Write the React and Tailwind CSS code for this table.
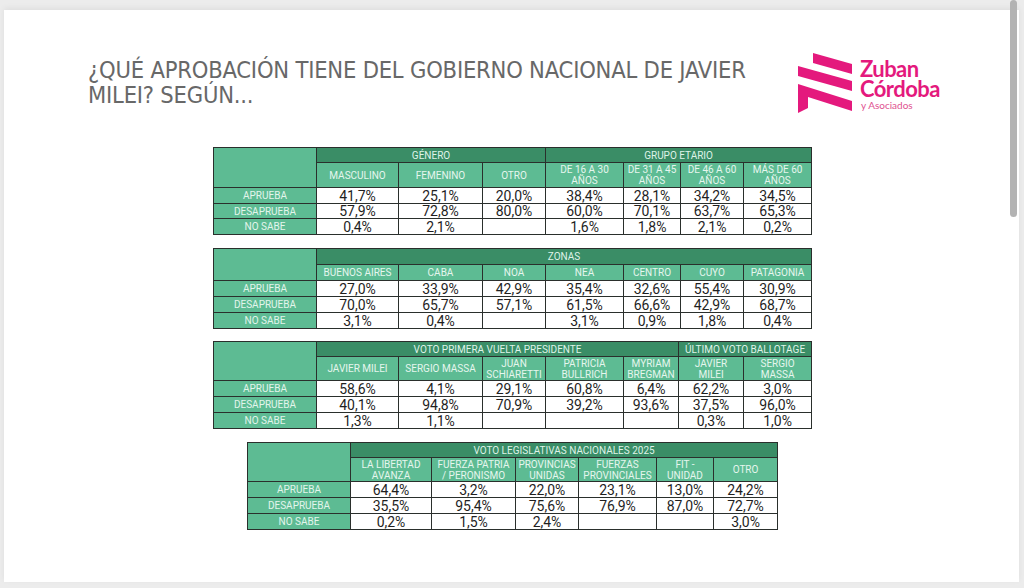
import React from "react";

const T1 = {
  left: 213,
  headH: 15,
  rowH: ["h-[16px]", "h-[15px]", "h-[16px]"],
  cols: [103, 82, 84, 63, 78, 57, 63, 68],
  groups: [
    { label: "GÉNERO", span: 3 },
    { label: "GRUPO ETARIO", span: 4 },
  ],
  subH: 25,
  subs: [
    ["MASCULINO"],
    ["FEMENINO"],
    ["OTRO"],
    ["DE 16 A 30", "AÑOS"],
    ["DE 31 A 45", "AÑOS"],
    ["DE 46 A 60", "AÑOS"],
    ["MÁS DE 60", "AÑOS"],
  ],
  rows: [
    ["APRUEBA", ["41,7%", "25,1%", "20,0%", "38,4%", "28,1%", "34,2%", "34,5%"]],
    ["DESAPRUEBA", ["57,9%", "72,8%", "80,0%", "60,0%", "70,1%", "63,7%", "65,3%"]],
    ["NO SABE", ["0,4%", "2,1%", "", "1,6%", "1,8%", "2,1%", "0,2%"]],
  ],
};

const T2 = {
  left: 213,
  headH: 16,
  rowH: ["h-[16px]", "h-[16px]", "h-[16px]"],
  cols: [103, 82, 84, 63, 78, 57, 63, 68],
  groups: [{ label: "ZONAS", span: 7 }],
  subH: 16,
  subs: [["BUENOS AIRES"], ["CABA"], ["NOA"], ["NEA"], ["CENTRO"], ["CUYO"], ["PATAGONIA"]],
  rows: [
    ["APRUEBA", ["27,0%", "33,9%", "42,9%", "35,4%", "32,6%", "55,4%", "30,9%"]],
    ["DESAPRUEBA", ["70,0%", "65,7%", "57,1%", "61,5%", "66,6%", "42,9%", "68,7%"]],
    ["NO SABE", ["3,1%", "0,4%", "", "3,1%", "0,9%", "1,8%", "0,4%"]],
  ],
};

const T3 = {
  left: 213,
  headH: 15,
  rowH: ["h-[16px]", "h-[16px]", "h-[16px]"],
  cols: [103, 82, 84, 63, 78, 55, 65, 68],
  groups: [
    { label: "VOTO PRIMERA VUELTA PRESIDENTE", span: 5 },
    { label: "ÚLTIMO VOTO BALLOTAGE", span: 2 },
  ],
  subH: 24,
  subs: [
    ["JAVIER MILEI"],
    ["SERGIO MASSA"],
    ["JUAN", "SCHIARETTI"],
    ["PATRICIA", "BULLRICH"],
    ["MYRIAM", "BREGMAN"],
    ["JAVIER", "MILEI"],
    ["SERGIO", "MASSA"],
  ],
  rows: [
    ["APRUEBA", ["58,6%", "4,1%", "29,1%", "60,8%", "6,4%", "62,2%", "3,0%"]],
    ["DESAPRUEBA", ["40,1%", "94,8%", "70,9%", "39,2%", "93,6%", "37,5%", "96,0%"]],
    ["NO SABE", ["1,3%", "1,1%", "", "", "", "0,3%", "1,0%"]],
  ],
};

const T4 = {
  left: 247,
  headH: 15,
  rowH: ["h-[16px]", "h-[16px]", "h-[16px]"],
  cols: [103, 81, 84, 63, 78, 57, 64],
  groups: [{ label: "VOTO LEGISLATIVAS NACIONALES 2025", span: 6 }],
  subH: 24,
  subs: [
    ["LA LIBERTAD", "AVANZA"],
    ["FUERZA PATRIA", "/ PERONISMO"],
    ["PROVINCIAS", "UNIDAS"],
    ["FUERZAS", "PROVINCIALES"],
    ["FIT -", "UNIDAD"],
    ["OTRO"],
  ],
  rows: [
    ["APRUEBA", ["64,4%", "3,2%", "22,0%", "23,1%", "13,0%", "24,2%"]],
    ["DESAPRUEBA", ["35,5%", "95,4%", "75,6%", "76,9%", "87,0%", "72,7%"]],
    ["NO SABE", ["0,2%", "1,5%", "2,4%", "", "", "3,0%"]],
  ],
};

const font = { fontFamily: "Roboto, 'Liberation Sans', sans-serif" };

function DataTable({ t, mt }) {
  return (
    <table
      className="table-fixed border-collapse border border-[#2a2f2c]"
      style={{ marginLeft: t.left - 4, marginTop: mt, width: t.cols.reduce((a, b) => a + b, 0), ...font }}
    >
      <colgroup>
        {t.cols.map((w, i) => (
          <col key={i} style={{ width: w }} />
        ))}
      </colgroup>
      <tbody>
        <tr>
          <td rowSpan={2} className="bg-[#5dbb93] border border-[#2a2f2c]" />
          {t.groups.map((g) => (
            <td
              key={g.label}
              colSpan={g.span}
              className="bg-[#3a8d66] border border-[#2a2f2c] text-center text-[10px] leading-[13px] text-[#dff3e8] p-0"
              style={{ height: t.headH }}
            >
              {g.label}
            </td>
          ))}
        </tr>
        <tr>
          {t.subs.map((s, i) => (
            <td
              key={i}
              className="bg-[#5dbb93] border border-[#2a2f2c] text-center text-[10px] leading-[11px] text-[#e6f6ee] p-0"
              style={{ height: t.subH }}
            >
              {s.map((line, j) => (
                <div key={j} className="whitespace-nowrap">
                  {line}
                </div>
              ))}
            </td>
          ))}
        </tr>
        {t.rows.map(([label, vals], r) => (
          <tr key={label}>
            <td className={`${t.rowH[r]} bg-[#5dbb93] border border-[#2a2f2c] text-center text-[10px] leading-[13px] text-[#e3f5ec] p-0`}>
              {label}
            </td>
            {vals.map((v, i) => (
              <td
                key={i}
                className={`${t.rowH[r]} bg-white border border-[#2a2f2c] text-center text-[14px] leading-[14px] text-[#1f1f1f] p-0`}
              >
                {v}
              </td>
            ))}
          </tr>
        ))}
      </tbody>
    </table>
  );
}

function Logo() {
  return (
    <div className="flex items-start gap-[6px]">
      <svg width="58" height="64" viewBox="0 0 58 64" className="mt-[1px]">
        <polygon points="17,2 56,13 56,23 17,12" fill="#e4197d" />
        <polygon points="2,15 56,30 56,40 2,25" fill="#e4197d" />
        <polygon points="2,33 56,50 56,60 12,46 12,57 2,62" fill="#e4197d" />
      </svg>
      <div className="flex flex-col text-[#e4197d]" style={{ fontFamily: "Lato, 'Open Sans', sans-serif" }}>
        <span className="text-[22px] font-bold leading-[19px] tracking-tight mt-[9px]">Zuban</span>
        <span className="text-[22px] font-bold leading-[21px] tracking-tight">Córdoba</span>
        <span className="text-[10px] leading-[12px] ml-[1px] text-[#e0518f]">y Asociados</span>
      </div>
    </div>
  );
}

export default function App() {
  return (
    <div className="relative w-[1024px] h-[588px] bg-[#ececec] pt-[10px] pl-[4px] pr-[5px] overflow-hidden">
      <div className="bg-white h-[572px] shadow-[0_-2px_6px_rgba(0,0,0,0.06)] flex flex-col">
        <div className="h-[137px] flex items-start">
          <h1
            className="ml-[84px] mt-[48px] w-[680px] text-[23.5px] leading-[25px] text-[#686868] tracking-[-0.2px]"
            style={{ fontFamily: "'Liberation Sans Narrow', 'DejaVu Sans Condensed', Roboto, sans-serif" }}
          >
            ¿QUÉ APROBACIÓN TIENE DEL GOBIERNO NACIONAL DE JAVIER
            <br />
            MILEI? SEGÚN...
          </h1>
          <div className="ml-[28px] mt-[40px]">
            <Logo />
          </div>
        </div>
        <DataTable t={T1} mt={0} />
        <DataTable t={T2} mt={13} />
        <DataTable t={T3} mt={12} />
        <DataTable t={T4} mt={13} />
      </div>
      <div className="absolute top-0 left-[1010px] w-[7px] h-[217px] rounded-full bg-[#b3b3b3]" />
    </div>
  );
}
